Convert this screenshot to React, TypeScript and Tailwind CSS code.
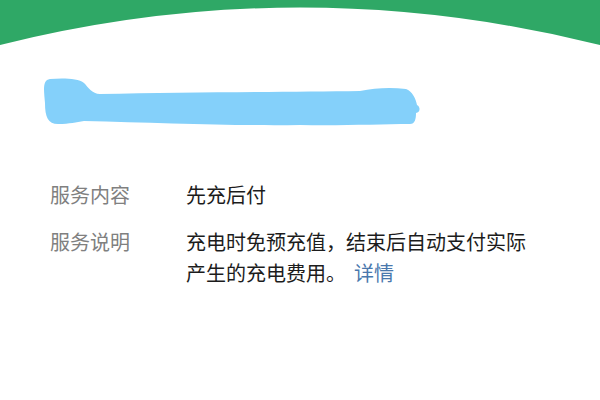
export default function App() {
  return (
    <div className="w-[600px] h-[400px] bg-white overflow-hidden font-['Noto_Sans_CJK_SC','Noto_Sans',sans-serif]">
      {/* green curved header */}
      <svg width="600" height="50" viewBox="0 0 600 50" className="block">
        <path d="M0 0 H600 V45 Q300 -30 0 45 Z" fill="#2fa866" />
      </svg>

      {/* redacted name scribble */}
      <svg width="420" height="56" viewBox="0 0 420 56" className="block mt-[27px] ml-[40px]">
        <path
          d="M10 2 C2 3 4 14 5 26 C5 40 8 47 18 47 C30 47 36 45 44 44 C120 46 200 49 260 48 C300 49 340 47 370 47 C375 47 376 42 376 36 C380 36 381 30 377 28 C376 22 372 14 366 12 C350 10 335 11 320 14 C250 15 150 15 60 17 C52 17 48 10 44 6 C38 1 22 1 10 2 Z"
          fill="#84d0fa"
        />
      </svg>

      <div className="flex flex-col gap-[16px] mt-[46px] text-[20px] leading-[31px]">
        <div className="flex">
          <div className="w-[186px] pl-[50px] shrink-0 text-[#808080]">服务内容</div>
          <div className="text-[#1c1c1c]">先充后付</div>
        </div>
        <div className="flex">
          <div className="w-[186px] pl-[50px] shrink-0 text-[#808080]">服务说明</div>
          <div className="flex flex-col text-[#1c1c1c]">
            <div>充电时免预充值，结束后自动支付实际</div>
            <div className="flex gap-[8px]">
              <span>产生的充电费用。</span>
              <span className="text-[#4a78ad]">详情</span>
            </div>
          </div>
        </div>
      </div>
    </div>
  );
}
